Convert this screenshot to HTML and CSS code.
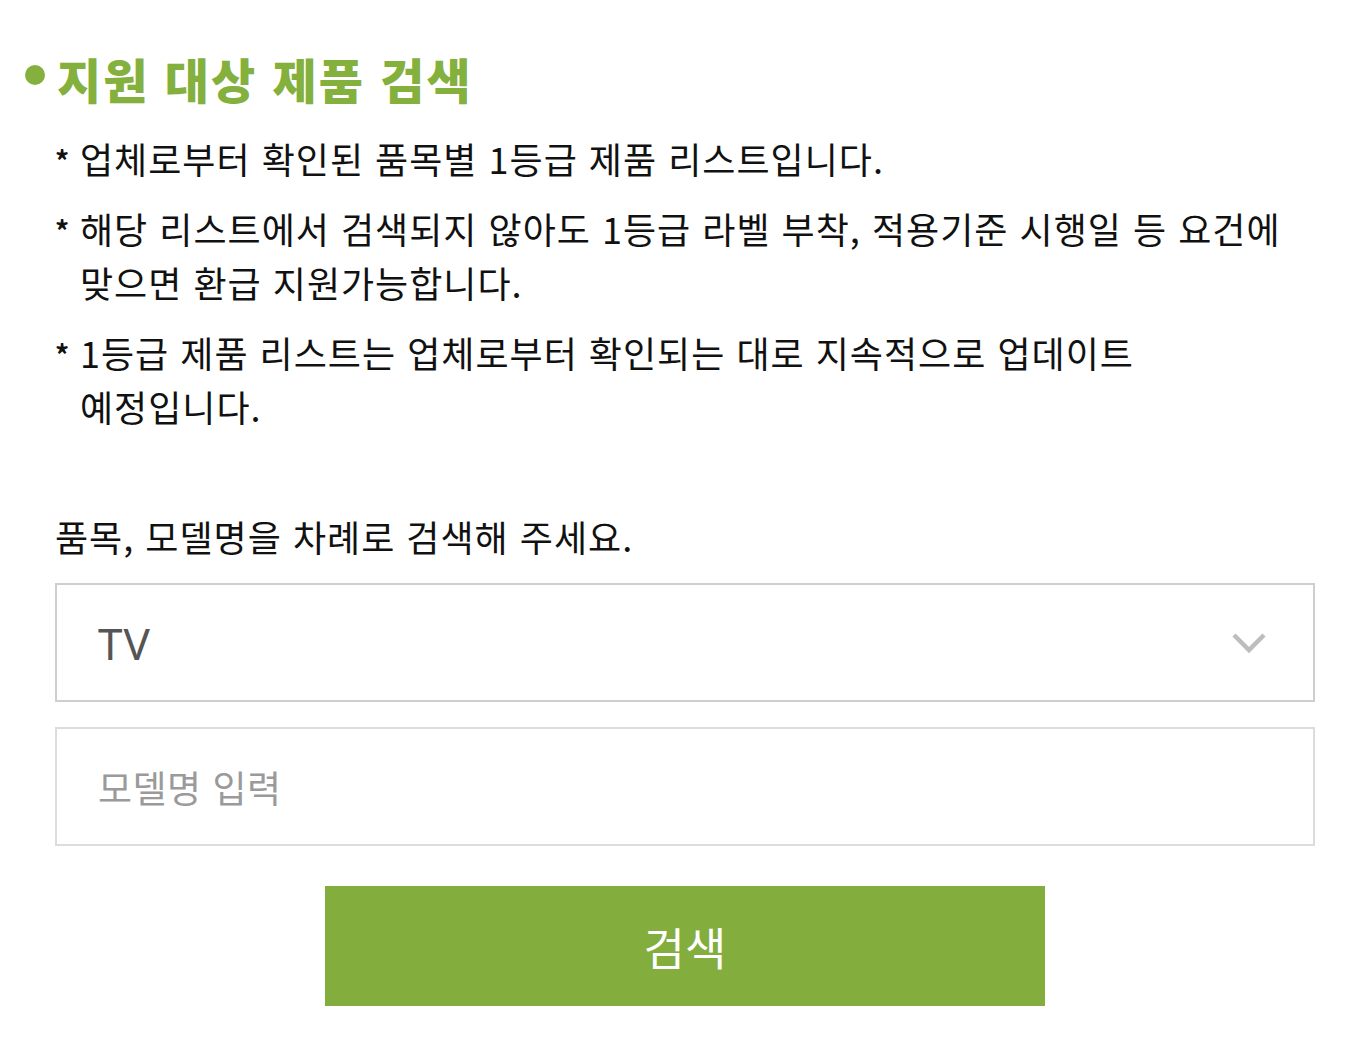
FILE: index.html
```html
<!DOCTYPE html>
<html lang="ko">
<head>
<meta charset="utf-8">
<link rel="stylesheet" href="styles.css">
</head>
<body>
<div class="page">
  <h2 class="title"><span class="dot"></span>지원 대상 제품 검색</h2>
  <ul class="notes">
    <li>업체로부터 확인된 품목별 1등급 제품 리스트입니다.</li>
    <li>해당 리스트에서 검색되지 않아도 1등급 라벨 부착, 적용기준 시행일 등 요건에 맞으면 환급 지원가능합니다.</li>
    <li>1등급 제품 리스트는 업체로부터 확인되는 대로 지속적으로 업데이트 <br>예정입니다.</li>
  </ul>
  <form class="search">
    <p class="guide">품목, 모델명을 차례로 검색해 주세요.</p>
    <div class="select">
      <span class="select-value">TV</span>
      <svg class="chevron" width="36" height="22" viewBox="0 0 36 22"><path d="M3 3 L18 18 L33 3" fill="none" stroke="#bdbdbd" stroke-width="4.5"/></svg>
    </div>
    <div class="input"><span class="placeholder">모델명 입력</span></div>
    <div class="actions"><button type="button" class="btn">검색</button></div>
  </form>
</div>
</body>
</html>
```

FILE: styles.css
```css
html, body {
  margin: 0;
  background: #fff;
}
body {
  font-family: "Noto Sans CJK KR", "Noto Sans", sans-serif;
  color: #111;
}
.page {
  padding: 46px 33px 0 25px;
}
.title {
  display: flex;
  align-items: center;
  margin: 0;
  font-size: 48px;
  font-weight: 900;
  color: #84b03d;
  line-height: 64px;
  letter-spacing: 2px;
}
.dot {
  width: 20px;
  height: 20px;
  border-radius: 50%;
  background: #84b03d;
  margin-right: 12px;
  margin-top: -6px;
}
.notes {
  list-style: none;
  margin: 21px 0 0 30px;
  padding: 0;
  font-size: 36px;
  line-height: 54px;
  letter-spacing: 1px;
  word-break: keep-all;
}
.notes li {
  position: relative;
  padding-left: 25px;
  margin-bottom: 16px;
}
.notes li::before {
  content: "*";
  position: absolute;
  left: 0;
  top: 2px;
  font-size: 28px;
  font-weight: 700;
}
.search {
  margin: 76px 0 0 30px;
}
.guide {
  margin: 0 0 20px;
  font-size: 36px;
  line-height: 54px;
  letter-spacing: 1px;
}
.select, .input {
  box-sizing: border-box;
  height: 119px;
  border: 2px solid #cfcfcf;
  display: flex;
  align-items: center;
  padding: 0 46px 0 41px;
}
.select {
  justify-content: space-between;
}
.select-value {
  font-size: 44px;
  color: #555;
  font-family: "Noto Sans", sans-serif;
  letter-spacing: 1px;
}
.input {
  margin-top: 25px;
  border-color: #dcdcdc;
}
.placeholder {
  font-size: 37px;
  color: #9a9a9a;
  letter-spacing: 0.5px;
}
.actions {
  display: flex;
  justify-content: center;
  margin-top: 40px;
}
.btn {
  width: 720px;
  height: 120px;
  border: 0;
  background: #83ae3d;
  color: #fff;
  font-family: "Noto Sans CJK KR", sans-serif;
  font-size: 45px;
  padding: 0;
}
```
